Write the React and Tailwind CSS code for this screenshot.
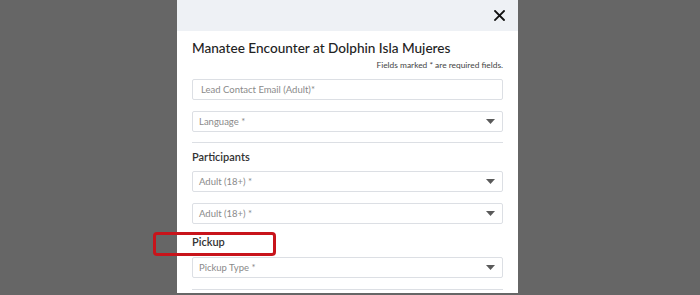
import React from 'react';

const Caret = () => (
  <svg width="9" height="5" viewBox="0 0 9 5" className="shrink-0">
    <path d="M0 0 L9 0 L4.5 5 Z" fill="#5a5a5a" />
  </svg>
);

const SelectBox = ({ label }) => (
  <div className="flex h-[21px] items-center justify-between rounded-[2px] border border-[#dcdfe4] bg-white pl-[6px] pr-[7px]">
    <span className="text-[9.5px] leading-none text-[#8a8a8a]">{label}</span>
    <Caret />
  </div>
);

const App = () => {
  return (
    <div className="relative h-[295px] w-[700px] overflow-hidden bg-[#666666] pl-[177px] font-['Lato','Liberation_Sans',sans-serif]">
      <div className="h-[293px] w-[341px] bg-white">
        <div className="flex h-[31px] items-center justify-end bg-[#eef1f5] pr-[13px]">
          <svg width="11" height="11" viewBox="0 0 11 11">
            <path d="M1 1 L10 10 M10 1 L1 10" stroke="#111" strokeWidth="1.8" strokeLinecap="square" />
          </svg>
        </div>
        <div className="px-[15px] pt-[7px]">
          <h2 className="text-[13.6px] leading-[20px] font-medium text-[#222]">
            Manatee Encounter at Dolphin Isla Mujeres
          </h2>
          <p className="mt-[2px] text-right text-[8.4px] leading-[10px] text-[#444]">
            Fields marked * are required fields.
          </p>
          <div className="mt-[9px] flex h-[21px] items-center rounded-[2px] border border-[#dcdfe4] bg-white pl-[8px]">
            <span className="text-[9.5px] leading-none text-[#8a8a8a]">Lead Contact Email (Adult)*</span>
          </div>
          <div className="mt-[11px]">
            <SelectBox label="Language *" />
          </div>
          <div className="mt-[10px] h-px bg-[#dcdfe4]" />
          <h3 className="mt-[7px] text-[11px] leading-[14px] font-semibold text-[#333]">Participants</h3>
          <div className="mt-[7px]">
            <SelectBox label="Adult (18+) *" />
          </div>
          <div className="mt-[11px]">
            <SelectBox label="Adult (18+) *" />
          </div>
          <h3 className="mt-[11px] text-[11px] leading-[14px] font-semibold text-[#333]">Pickup</h3>
          <div className="mt-[8px]">
            <SelectBox label="Pickup Type *" />
          </div>
          <div className="mt-[11px] h-px bg-[#dcdfe4]" />
        </div>
      </div>
      <div className="absolute left-[153px] top-[232px] h-[24px] w-[123px] rounded-[4px] border-[3px] border-[#c8141b]" />
    </div>
  );
};

export default App;
